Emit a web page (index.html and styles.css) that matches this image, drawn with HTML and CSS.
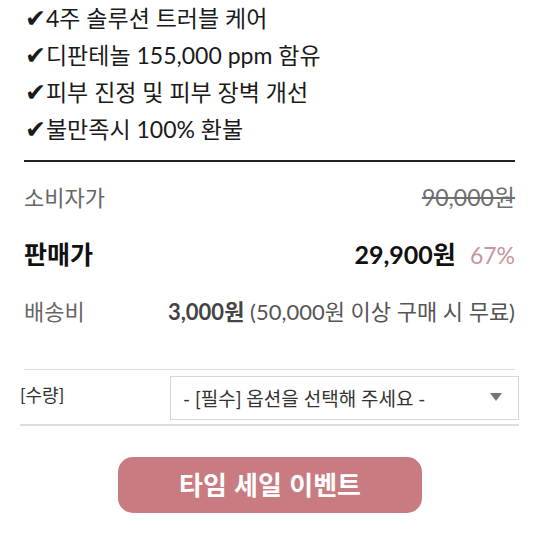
FILE: index.html
```html
<!DOCTYPE html>
<html lang="ko">
<head>
<meta charset="utf-8">
<link rel="stylesheet" href="styles.css">
</head>
<body>
<div class="page">
  <ul class="features">
    <li><span class="check">✔</span>4주 솔루션 트러블 케어</li>
    <li><span class="check">✔</span>디판테놀 155,000 ppm 함유</li>
    <li><span class="check">✔</span>피부 진정 및 피부 장벽 개선</li>
    <li><span class="check">✔</span>불만족시 100% 환불</li>
  </ul>
  <div class="prices">
    <div class="row">
      <span class="label">소비자가</span>
      <span class="strike">90,000원</span>
    </div>
    <div class="row sale">
      <span class="label">판매가</span>
      <span class="value">29,900원<span class="rate">67%</span></span>
    </div>
    <div class="row">
      <span class="label">배송비</span>
      <span class="ship"><b>3,000원</b> (50,000원 이상 구매 시 무료)</span>
    </div>
  </div>
  <div class="options">
    <div class="opt-row">
      <span class="opt-label">[수량]</span>
      <div class="select">
        <span>- [필수] 옵션을 선택해 주세요 -</span>
        <svg width="12" height="8" viewBox="0 0 12 8"><path d="M0 0H12L6 8Z" fill="#777"/></svg>
      </div>
    </div>
  </div>
  <div class="btn-wrap">
    <button class="btn">타임 세일 이벤트</button>
  </div>
</div>
</body>
</html>
```
FILE: styles.css
```css
* { box-sizing: border-box; }
body {
  margin: 0;
  background: #fff;
  font-family: Lato, "Noto Sans CJK KR", sans-serif;
  color: #222;
}
.page {
  width: 540px;
  height: 540px;
  overflow: hidden;
}
.features {
  list-style: none;
  font-size: 23px;
  color: #1a1a1a;
  border-bottom: 2px solid #222;
  margin: 0 25px 0 24px;
  padding: 0 0 12px 1px;
}
.features li {
  height: 37px;
  line-height: 37px;
  white-space: nowrap;
}
.check {
  font-family: "DejaVu Sans", sans-serif;
  font-size: 25px;
  line-height: 1;
}
.prices {
  margin: 5px 25px 0 24px;
  border-bottom: 1px solid #ddd;
  padding-bottom: 31px;
}
.row {
  height: 57px;
  display: flex;
  align-items: center;
  justify-content: space-between;
  font-size: 22px;
  color: #666;
  white-space: nowrap;
}
.strike {
  text-decoration: line-through;
  color: #6e6e6e;
  font-size: 23px;
}
.sale .label {
  font-weight: 700;
  color: #111;
  font-size: 25px;
}
.sale .value {
  font-weight: 700;
  color: #111;
  font-size: 25px;
}
.rate {
  color: #c9959c;
  font-weight: 400;
  margin-left: 14px;
  font-size: 23px;
}
.ship { color: #555; font-size: 22px; }
.ship b { color: #444; }
.options {
  margin: 0 21px 0 20px;
  padding: 6px 0 4px;
  border-bottom: 2px solid #ddd;
}
.opt-row {
  display: flex;
  align-items: center;
  justify-content: space-between;
}
.opt-label {
  font-size: 18px;
  color: #333;
  align-self: flex-start;
  margin-top: 5px;
}
.select {
  width: 349px;
  height: 44px;
  border: 1px solid #d6d6d6;
  display: flex;
  align-items: center;
  justify-content: space-between;
  padding: 0 16px 2px 12px;
  font-size: 19px;
  color: #333;
  white-space: nowrap;
}
.btn-wrap {
  display: flex;
  justify-content: center;
  padding-top: 31px;
}
.btn {
  width: 304px;
  height: 56px;
  border: 0;
  border-radius: 15px;
  background: #c87b81;
  color: #fff;
  font-family: "Noto Sans CJK KR", sans-serif;
  font-weight: 700;
  font-size: 26px;
  padding: 0 0 4px;
}
```
